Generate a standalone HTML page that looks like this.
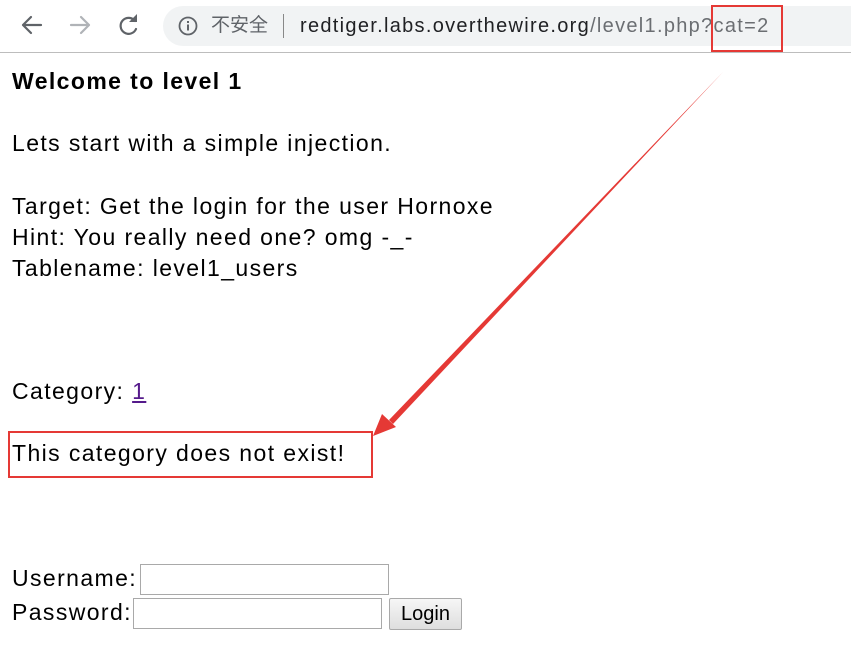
<!DOCTYPE html>
<html><head><meta charset="utf-8"><style>
body{margin:0;width:851px;height:661px;background:#fff;position:relative;overflow:hidden;font-family:"Liberation Sans","Noto Sans CJK SC",sans-serif;}
.t{position:absolute;left:12px;font-size:23px;color:#000;white-space:nowrap;line-height:31px;letter-spacing:1.4px;}
.inp{position:absolute;border:1px solid #a9a9a9;background:#fff;height:29px;}
</style></head><body>
<div style="position:absolute;left:0;top:0;width:851px;height:52px;background:#fff;border-bottom:1px solid #bdbdbd"></div>
<svg style="position:absolute;left:0;top:0" width="160" height="52">
<g fill="none" stroke-width="2.2" stroke-linecap="round" stroke-linejoin="round">
<path d="M41 25H23M31 17l-8 8 8 8" stroke="#5f6368"/>
<path d="M71 25h18M81 17l8 8-8 8" stroke="#b0b3b7"/>
<path d="M135 21a8 8 0 1 0 1 8" stroke="#5f6368"/>
</g>
<path d="M137 14v8h-8z" fill="#5f6368"/>
</svg>
<div style="position:absolute;left:163px;top:6px;width:720px;height:40px;border-radius:20px;background:#f1f3f4"></div>
<svg style="position:absolute;left:177px;top:15px" width="22" height="22"><circle cx="11" cy="11" r="8.5" fill="none" stroke="#5f6368" stroke-width="1.8"/><rect x="10" y="9.5" width="2" height="6" fill="#5f6368"/><rect x="10" y="6" width="2" height="2" fill="#5f6368"/></svg>
<div style="position:absolute;left:211px;top:12px;font-size:19px;line-height:28px;color:#5f6368;white-space:nowrap">不安全</div>
<div style="position:absolute;left:283px;top:14px;width:1px;height:24px;background:#888"></div>
<div style="position:absolute;left:300px;top:12px;font-size:20px;line-height:28px;white-space:nowrap;color:#202124;letter-spacing:1.3px">redtiger.labs.overthewire.org<span style="color:#6b6e72">/level1.php?cat=2</span></div>
<div style="position:absolute;left:711px;top:5px;width:68px;height:43px;border:2px solid #e53935"></div>

<div class="t" style="top:66px;font-weight:bold">Welcome to level 1</div>
<div class="t" style="top:128px">Lets start with a simple injection.</div>
<div class="t" style="top:191px">Target: Get the login for the user Hornoxe</div>
<div class="t" style="top:222px">Hint: You really need one? omg -_-</div>
<div class="t" style="top:253px">Tablename: level1_users</div>
<div class="t" style="top:376px">Category: <span style="color:#551a8b;text-decoration:underline">1</span></div>
<div class="t" style="top:438px">This category does not exist!</div>
<div style="position:absolute;left:8px;top:431px;width:361px;height:43px;border:2px solid #e53935"></div>
<svg style="position:absolute;left:0;top:0" width="851" height="661">
<polygon points="723,72 389,420 393,424" fill="#e53935"/>
<polygon points="373,436 382,414 396,427" fill="#e53935"/>
</svg>
<div class="t" style="top:563px">Username:</div>
<div class="inp" style="left:140px;top:564px;width:247px"></div>
<div class="t" style="top:597px">Password:</div>
<div class="inp" style="left:133px;top:598px;width:247px"></div>
<div style="position:absolute;left:389px;top:598px;width:71px;height:30px;border:1px solid #a9a9a9;border-radius:2px;background:linear-gradient(#f6f6f6,#dedede);font-size:20px;line-height:30px;text-align:center">Login</div>
</body></html>
